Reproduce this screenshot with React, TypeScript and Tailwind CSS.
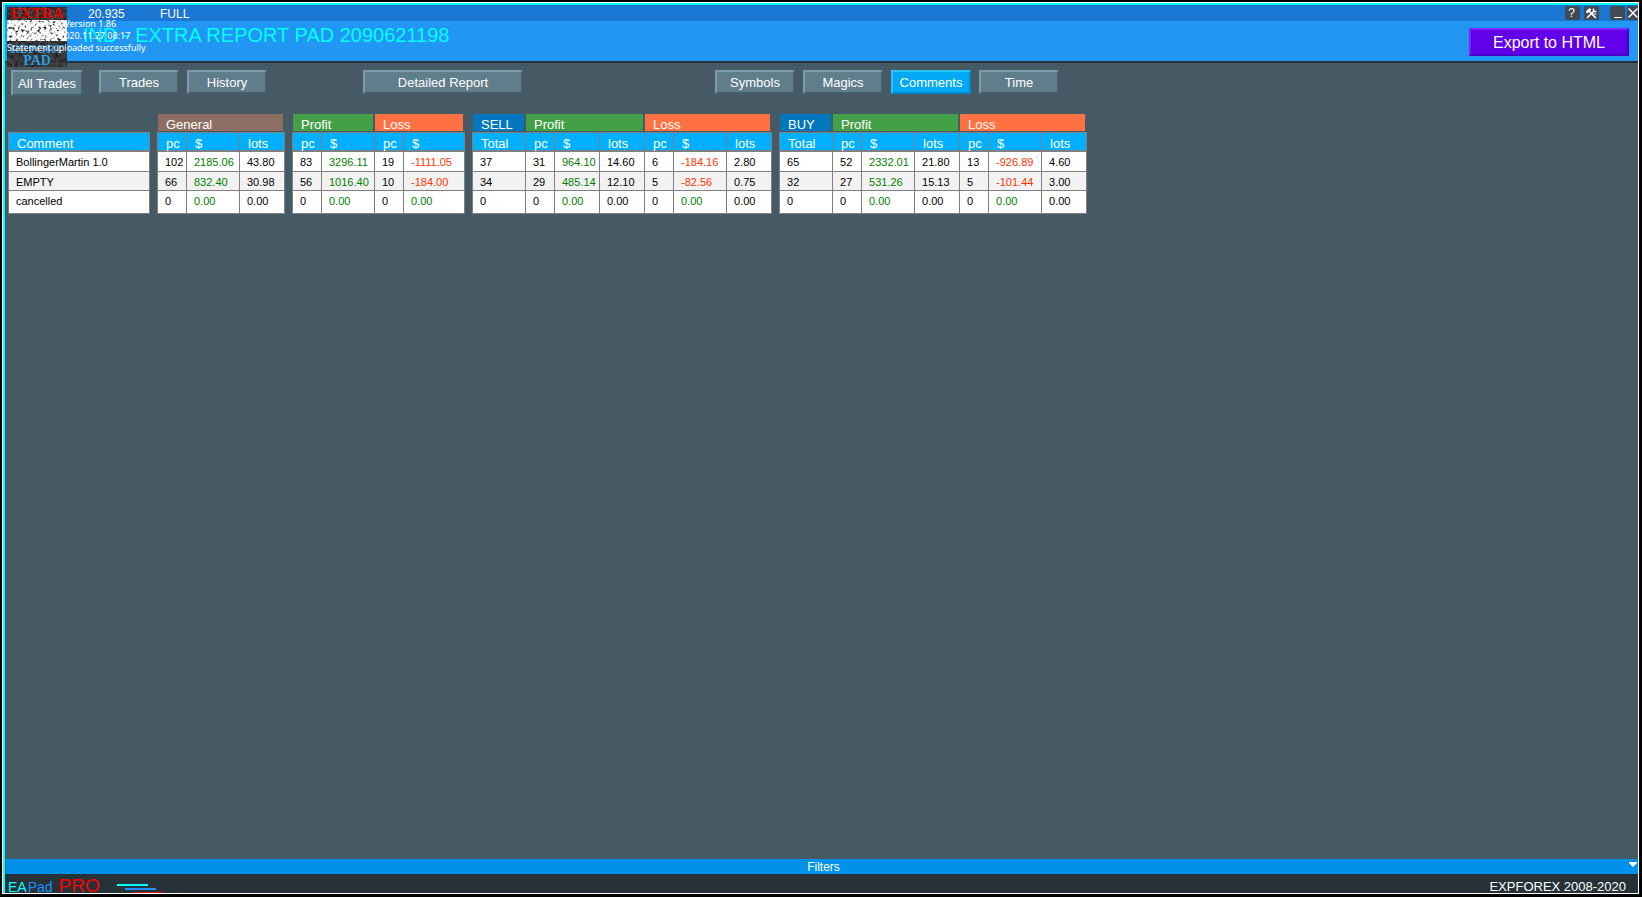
import React from "react";

const LINE = "border-[#808080]";

const colWidths = [
  "w-[142px]",
  "w-[8px]", "w-[29px]", "w-[53px]", "w-[45px]",
  "w-[8px]", "w-[29px]", "w-[53px]", "w-[29px]", "w-[61px]",
  "w-[8px]", "w-[53px]", "w-[29px]", "w-[45px]", "w-[45px]", "w-[29px]", "w-[53px]", "w-[45px]",
  "w-[8px]", "w-[53px]", "w-[29px]", "w-[53px]", "w-[45px]", "w-[29px]", "w-[53px]", "w-[45px]",
];

type Group = { label: string; span: number; color: string } | null;

const groups: Group[] = [
  null,
  { label: "General", span: 3, color: "bg-[#8d6e63]" },
  null,
  { label: "Profit", span: 2, color: "bg-[#43a047]" },
  { label: "Loss", span: 2, color: "bg-[#ff7043]" },
  null,
  { label: "SELL", span: 1, color: "bg-[#0277bd]" },
  { label: "Profit", span: 3, color: "bg-[#43a047]" },
  { label: "Loss", span: 3, color: "bg-[#ff7043]" },
  null,
  { label: "BUY", span: 1, color: "bg-[#0277bd]" },
  { label: "Profit", span: 3, color: "bg-[#43a047]" },
  { label: "Loss", span: 3, color: "bg-[#ff7043]" },
];

const columns = [
  "Comment", "|", "pc", "$", "lots", "|", "pc", "$", "pc", "$", "|",
  "Total", "pc", "$", "lots", "pc", "$", "lots", "|",
  "Total", "pc", "$", "lots", "pc", "$", "lots",
];

const rows = [
  {
    style: "h-[20px] bg-white",
    cells: ["BollingerMartin 1.0", "|", "102", "2185.06", "43.80", "|", "83", "3296.11", "19", "-1111.05", "|", "37", "31", "964.10", "14.60", "6", "-184.16", "2.80", "|", "65", "52", "2332.01", "21.80", "13", "-926.89", "4.60"],
  },
  {
    style: "h-[19px] bg-[#f2f2f2]",
    cells: ["EMPTY", "|", "66", "832.40", "30.98", "|", "56", "1016.40", "10", "-184.00", "|", "34", "29", "485.14", "12.10", "5", "-82.56", "0.75", "|", "32", "27", "531.26", "15.13", "5", "-101.44", "3.00"],
  },
  {
    style: "h-[23px] bg-white",
    cells: ["cancelled", "|", "0", "0.00", "0.00", "|", "0", "0.00", "0", "0.00", "|", "0", "0", "0.00", "0.00", "0", "0.00", "0.00", "|", "0", "0", "0.00", "0.00", "0", "0.00", "0.00"],
  },
];

function valueColor(column: string, value: string) {
  if (column !== "$") return "text-black";
  return value.startsWith("-") ? "text-[#ff3300]" : "text-[#008000]";
}

function StatsTable() {
  return (
    <table className="w-[1079px] table-fixed border-separate border-spacing-0 text-left">
      <colgroup>
        {colWidths.map((w, i) => (
          <col key={i} className={w} />
        ))}
      </colgroup>
      <thead>
        <tr className="h-[18px] text-[13px] text-white">
          <td />
          {groups.map((g, i) =>
            g ? (
              <th
                key={i}
                colSpan={g.span}
                scope="colgroup"
                className={`border-r-2 border-b border-[#455a64] p-0 pt-1 pl-2 align-top leading-[13px] font-normal ${g.color}`}
              >
                {g.label}
              </th>
            ) : (
              <td key={i} />
            )
          )}
        </tr>
        <tr className="h-[20px] text-[13px] text-white">
          {columns.map((c, i) =>
            c === "|" ? (
              <td key={i} className={`border-r ${LINE} p-0`} />
            ) : (
              <th
                key={i}
                scope="col"
                className={`border-t border-r border-b-2 ${LINE} bg-[#00b0ff] p-0 pt-1 pl-2 align-top leading-[13px] font-normal ${i === 0 ? "border-l" : ""}`}
              >
                {c}
              </th>
            )
          )}
        </tr>
      </thead>
      <tbody>
        {rows.map((row, r) => (
          <tr key={r} className="text-[11px] leading-4">
            {row.cells.map((v, i) =>
              v === "|" ? (
                <td key={i} className={`border-r ${LINE} p-0`} />
              ) : (
                <td
                  key={i}
                  className={`border-r border-b ${LINE} p-0 pt-[2px] pl-[7px] align-top whitespace-nowrap ${row.style} ${valueColor(columns[i], v)} ${i === 0 ? "border-l" : ""}`}
                >
                  {v}
                </td>
              )
            )}
          </tr>
        ))}
      </tbody>
    </table>
  );
}

function TabButton({ label, width = "w-20", height = "h-6", active = false }: { label: string; width?: string; height?: string; active?: boolean }) {
  const tone = active
    ? "border-t-[#29c5ff] border-l-[#29c5ff] border-r-[#0288d1] border-b-[#0288d1] bg-[#03a9f4]"
    : "border-t-[#7d9aa8] border-l-[#7d9aa8] border-r-[#455f6b] border-b-[#455f6b] bg-[#607d8b]";
  return (
    <button type="button" aria-pressed={active} className={`flex shrink-0 items-center justify-center border-2 pt-[2px] text-[13px] leading-[18px] whitespace-nowrap text-white ${width} ${height} ${tone}`}>
      {label}
    </button>
  );
}

function Logo() {
  return (
    <svg className="absolute top-[2px] left-[2px]" width="60" height="60" viewBox="0 0 60 60" role="img" aria-label="Extra Report Pad">
      <defs>
        <filter id="darkGrain" x="0" y="0" width="100%" height="100%" colorInterpolationFilters="sRGB">
          <feTurbulence type="fractalNoise" baseFrequency="0.25" numOctaves="2" seed="4" />
          <feColorMatrix values="0.35 0 0 0 0.04  0.35 0 0 0 0.04  0.35 0 0 0 0.04  0 0 0 0 1" />
        </filter>
        <filter id="lightGrain" x="0" y="0" width="100%" height="100%" colorInterpolationFilters="sRGB">
          <feTurbulence type="fractalNoise" baseFrequency="0.35" numOctaves="2" seed="9" />
          <feColorMatrix values="3 0 0 0 -0.5  3 0 0 0 -0.5  3 0 0 0 -0.5  0 0 0 0 1" />
        </filter>
      </defs>
      <rect width="60" height="60" fill="#333" />
      <rect width="60" height="60" filter="url(#darkGrain)" />
      <rect y="13" width="60" height="21" filter="url(#lightGrain)" />
      <g fontFamily="Liberation Serif, serif" fontWeight="bold" textAnchor="middle">
        <text x="30" y="11" fontSize="15" fill="#f00000">EXTRA</text>
        <text x="30" y="46" fontSize="13" fill="#2a9de0">REPORT</text>
        <text x="30" y="58" fontSize="14" fill="#2a9de0">PAD</text>
      </g>
    </svg>
  );
}

export default function App() {
  return (
    <div className="h-screen bg-black pt-[2px] pr-[3px] pb-[3px] pl-[2px] font-['Liberation_Sans',Arial,sans-serif]">
      <div className="h-full border border-white">
        <main className="relative flex h-full flex-col overflow-hidden border-t-2 border-l-2 border-[#00ffff] bg-[#455a64]">
          <header className="border-b-2 border-[#263238] bg-[#2196f3]">
            <div className="flex h-4 items-center bg-[#1976d2] text-[12px] leading-[14px] text-white">
              <span className="ml-[83px] w-[72px] pt-[2px]">20.935</span>
              <span className="pt-[2px]">FULL</span>
              <div className="ml-auto flex items-center">
                <button type="button" aria-label="Help" className="mr-1 flex h-[14px] w-[15px] items-center justify-center rounded-[2px] bg-[#424a56] pr-[2px] text-[12px] leading-[14px]">?</button>
                <button type="button" aria-label="Settings" className="mr-[11px] flex h-[14px] w-[15px] items-center justify-center rounded-[2px] bg-[#424a56]">
                  <svg width="11" height="11" viewBox="0 0 11 11" fill="none" stroke="#fff" aria-hidden="true">
                    <path d="M.5 4.500 4.500.800" strokeWidth="2.400" />
                    <path d="M3 3 9.800 10" strokeWidth="1.700" />
                    <path d="M7.500.5V3.500H10.500M7.500 3.500 1 10" strokeWidth="1.500" />
                    <path d="M6 6H10.500" strokeWidth="1" />
                  </svg>
                </button>
                <button type="button" aria-label="Minimize" className="mr-[2px] flex h-[14px] w-[15px] items-end justify-center rounded-[2px] bg-[#424a56] pb-[2px]">
                  <span className="h-px w-2 bg-white" />
                </button>
                <button type="button" aria-label="Close" className="flex h-[14px] w-[11px] items-center justify-end rounded-l-[2px] bg-[#424a56]">
                  <svg width="10" height="10" viewBox="0 0 10 10" stroke="#fff" strokeWidth="1.5" aria-hidden="true">
                    <path d="M.5.5 9.5 9.5M9.5.5.5 9.5" />
                  </svg>
                </button>
              </div>
            </div>
            <div className="flex h-10 items-start justify-between pr-[9px] pl-[78px]">
              <h1 className="pt-[2px] text-[20px] leading-6 whitespace-pre text-[#00ffff]">IND - EXTRA REPORT PAD 2090621198</h1>
              <button type="button" className="mt-[7px] flex h-7 w-40 items-center justify-center border-2 border-t-[#7c22ff] border-r-[#4600c8] border-b-[#4600c8] border-l-[#7c22ff] bg-[#6200ea] pt-[2px] text-[16px] leading-[22px] text-white">
                Export to HTML
              </button>
            </div>
          </header>
          <Logo />
          <div className="absolute top-[13px] left-[2px] font-['Noto_Sans',sans-serif] text-[9px] leading-3 whitespace-nowrap text-white">
            <p>Myfxbook EA Version 1.86</p>
            <p>Last update 2020.11.27 08:17</p>
            <p>Statement uploaded successfully</p>
          </div>
          <nav className="flex items-start pt-[7px] pl-[6px]">
            <TabButton label="All Trades" width="w-[72px]" height="h-[26px]" />
            <div className="ml-4 flex gap-2">
              <TabButton label="Trades" />
              <TabButton label="History" />
            </div>
            <div className="ml-24">
              <TabButton label="Detailed Report" width="w-40" />
            </div>
            <div className="ml-48 flex gap-2">
              <TabButton label="Symbols" />
              <TabButton label="Magics" />
              <TabButton label="Comments" active />
              <TabButton label="Time" />
            </div>
          </nav>
          <section className="min-h-0 flex-1 pt-[18px] pl-[3px]">
            <StatsTable />
          </section>
          <button type="button" className="ml-px flex h-[15px] shrink-0 items-center bg-[#0091ea] text-[12px] leading-[13px] text-white">
            <span className="flex-1 pt-[2px] pl-3 text-center">Filters</span>
            <svg width="8" height="5" viewBox="0 0 8 5" fill="#fff" className="mr-px mb-1" aria-hidden="true">
              <path d="M0 0H8V1L4 5 0 1Z" />
            </svg>
          </button>
          <footer className="flex h-[19px] shrink-0 items-start bg-[#263238] pl-[3px]">
            <span className="pt-[6px] text-[14px] leading-[14px] text-[#00ffff]">EA</span>
            <span className="ml-px pt-[6px] text-[14px] leading-[14px] text-[#1e90ff]">Pad</span>
            <span className="ml-[6px] pt-[2px] text-[19px] leading-[19px] text-[#ff0000]">PRO</span>
            <svg width="48" height="9" viewBox="0 0 48 9" className="mt-[10px] ml-[17px]" aria-hidden="true">
              <path d="M0 1H31" stroke="#00ffff" strokeWidth="2" />
              <path d="M8 5H39" stroke="#1e90ff" strokeWidth="2" />
              <path d="M16 8.500H47" stroke="#d01818" strokeWidth="1" />
            </svg>
            <span className="mr-3 ml-auto pt-[6px] text-[13px] leading-[13px] text-white">EXPFOREX 2008-2020</span>
          </footer>
        </main>
      </div>
    </div>
  );
}
